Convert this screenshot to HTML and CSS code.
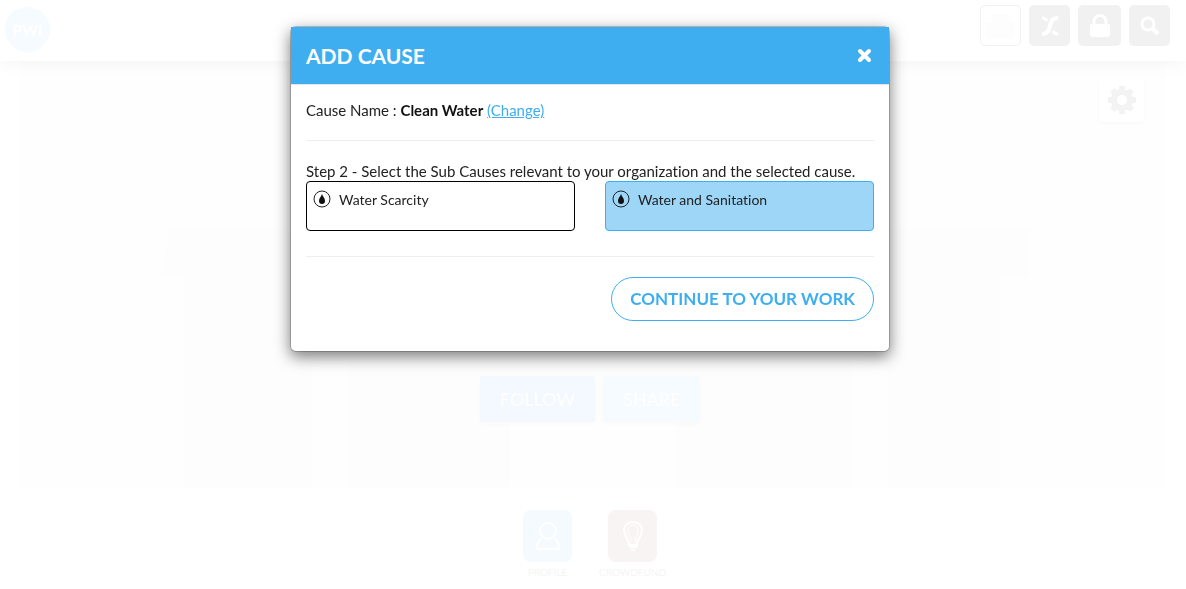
FILE: index.html
```html
<!DOCTYPE html>
<html lang="en">
<head>
    <meta charset="UTF-8">
    <meta name="viewport" content="width=device-width, initial-scale=1.0">
    <title>Add Cause</title>
    <link rel="stylesheet" href="styles.css">
</head>
<body>
    <header class="site-header">
        <a class="logo" href="#">PWI</a>
        <nav class="header-icons">
            <button class="icon-button icon-outline" aria-label="Organization">
                <svg width="29" height="26" viewBox="0 0 29 26" fill="#fdfdfd"><path d="M6 0h17v9h6v17H0V9h6z"/></svg>
            </button>
            <button class="icon-button" aria-label="Connections">
                <svg width="18" height="20" viewBox="0 0 18 20" fill="none" stroke="#fff" stroke-width="4"><path d="M17 2C11 2 10 5 9 10S6 18 1 18"/><path d="M1 2c2 0 4 1 5 3M17 18c-2 0-4-1-5-3" stroke-width="3"/></svg>
            </button>
            <button class="icon-button icon-lock" aria-label="Log in">
                <svg width="20" height="24" viewBox="0 0 20 24"><path d="M4 12V7a6 5.500 0 0 1 12 0v5" fill="none" stroke="#fff" stroke-width="3"/><rect y="10" width="20" height="13" rx="2" fill="#fff"/></svg>
            </button>
            <button class="icon-button" aria-label="Search">
                <svg width="20" height="20" viewBox="0 0 20 20" fill="none" stroke="#fff"><circle cx="8" cy="8" r="6" stroke-width="3"/><path d="M12 12l6 6" stroke-width="4"/></svg>
            </button>
        </nav>
    </header>

    <main>
        <section class="cover">
            <svg class="cover-art" viewBox="0 0 1146 428" preserveAspectRatio="none" fill="#fdfdfd" aria-hidden="true">
                <path d="M150 168H1009V216H980V426H867V300H833V426H655V360H490V426H327V300H293V426H165V216H142z"/>
            </svg>
            <button class="settings-button" aria-label="Settings">
                <svg width="28" height="28" viewBox="0 0 28 28">
                    <g fill="#f3f3f3">
                        <rect x="11" width="6" height="28" rx="1"/>
                        <rect x="11" width="6" height="28" rx="1" transform="rotate(45 14 14)"/>
                        <rect x="11" width="6" height="28" rx="1" transform="rotate(90 14 14)"/>
                        <rect x="11" width="6" height="28" rx="1" transform="rotate(135 14 14)"/>
                        <circle cx="14" cy="14" r="11"/>
                    </g>
                    <circle cx="14" cy="14" r="5" fill="#fff"/>
                </svg>
            </button>
            <div class="cover-actions">
                <button class="follow-button">FOLLOW</button>
                <button class="share-button">SHARE</button>
            </div>
        </section>

        <nav class="tabs">
            <a class="tab" href="#">
                <span class="tab-icon profile">
                    <svg width="24" height="28" viewBox="0 0 24 28" fill="none" stroke="#fff" stroke-width="2"><circle cx="12" cy="9" r="8"/><path d="M6 17c-3 1-5 4-5 10h22c0-6-2-9-5-10"/></svg>
                </span>
                PROFILE
            </a>
            <a class="tab" href="#">
                <span class="tab-icon crowdfund">
                    <svg width="20" height="30" viewBox="0 0 20 30" fill="none" stroke="#fff"><path d="M6 24c0-6-5-9-5-15a9 8 0 0 1 18 0c0 6-5 9-5 15z" stroke-width="2"/><path d="M8 22c0-6-3-8-3-13a5 5 0 0 1 10 0c0 5-3 7-3 13"/><path d="M6 26h8M8 29h4" stroke-width="2"/></svg>
                </span>
                CROWDFUND
            </a>
        </nav>
    </main>

    <div class="modal">
        <div class="modal-dialog" role="dialog" aria-labelledby="modalTitle">
            <div class="modal-header">
                <h1 class="modal-title" id="modalTitle">ADD CAUSE</h1>
                <button class="close-button" aria-label="Close">
                    <svg width="15" height="15" viewBox="0 0 15 15" stroke="#fff" stroke-width="4" stroke-linecap="round"><path d="M3 3l9 9M12 3l-9 9"/></svg>
                </button>
            </div>
            <div class="modal-body">
                <p>Cause Name : <strong>Clean Water</strong> <a class="change-link" href="#">(Change)</a></p>
                <hr>
                <p class="step">Step 2 - Select the Sub Causes relevant to your organization and the selected cause.</p>
                <div class="sub-causes">
                    <button class="sub-cause" aria-pressed="false">
                        <svg width="18" height="18" viewBox="0 0 18 18"><circle cx="9" cy="9" r="8" fill="none" stroke="#222"/><path d="M9 4c1 3 3 4 3 7a3 3 0 0 1-6 0c0-3 2-4 3-7z" fill="#111"/></svg>
                        Water Scarcity
                    </button>
                    <button class="sub-cause selected" aria-pressed="true">
                        <svg width="18" height="18" viewBox="0 0 18 18"><circle cx="9" cy="9" r="8" fill="none" stroke="#222"/><path d="M9 4c1 3 3 4 3 7a3 3 0 0 1-6 0c0-3 2-4 3-7z" fill="#111"/></svg>
                        Water and Sanitation
                    </button>
                </div>
                <hr>
                <div class="modal-actions">
                    <button class="continue-button">CONTINUE TO YOUR WORK</button>
                </div>
            </div>
        </div>
    </div>
</body>
</html>
```
FILE: styles.css
```css
* {
    box-sizing: border-box;
}

body {
    margin: 0;
    background: #fff;
    color: #222;
    font-family: Lato, "Liberation Sans", sans-serif;
    font-size: 15px;
    font-variant-ligatures: none;
    line-height: 20px;
    overflow: hidden;
}

button {
    padding: 0;
    border: none;
    background: none;
    color: inherit;
    font: inherit;
    cursor: pointer;
}

svg {
    display: block;
}

p {
    margin: 0;
}

/* Page header */
.site-header {
    display: flex;
    justify-content: space-between;
    align-items: flex-start;
    height: 61px;
    padding: 5px 16px 0 5px;
    background: #fff;
    box-shadow: 0 5px 15px rgba(0, 0, 0, 0.03);
    position: relative; /* Keep the shadow above the cover */
    z-index: 1;
}

.logo {
    display: flex;
    align-items: center;
    justify-content: center;
    width: 45px;
    height: 45px;
    margin-top: 2px;
    border-radius: 50%;
    background: #f5fbff;
    color: #fff;
    font-size: 15px;
    font-weight: 900;
    text-decoration: none;
}

.header-icons {
    display: flex;
    gap: 8px;
}

.icon-button {
    display: flex;
    align-items: center;
    justify-content: center;
    width: 41px;
    height: 41px;
    border-radius: 5px;
    background: #f1f1f1;
}

.icon-outline {
    border: 1px solid #f1f1f1;
    background: #fff;
}

.icon-lock {
    width: 43px;
}

/* Cover */
.cover {
    display: flex;
    flex-direction: column;
    justify-content: space-between;
    min-height: 428px;
    margin: 0 20px;
    padding: 17px 22px 67px;
    background: #fefefe;
    position: relative;
}

.cover-art {
    position: absolute; /* Table drawing behind the buttons */
    inset: 0;
    width: 100%;
    height: 100%;
}

.settings-button {
    display: flex;
    align-items: center;
    justify-content: center;
    align-self: flex-end;
    width: 45px;
    height: 44px;
    border-radius: 3px;
    background: #fff;
    box-shadow: 0 1px 3px rgba(0, 0, 0, 0.03);
    position: relative;
}

.cover-actions {
    display: flex;
    justify-content: center;
    gap: 8px;
    padding-right: 6px;
    position: relative;
}

.follow-button,
.share-button {
    height: 46px;
    padding: 0 20px;
    border-radius: 3px;
    background: #f3f9fe;
    box-shadow: 0 2px 4px rgba(0, 0, 0, 0.02);
    color: #fff;
    font-size: 18px;
}

.share-button {
    background: #f5fbff;
}

/* Tabs */
.tabs {
    display: flex;
    justify-content: center;
    padding: 21px 6px 0 0;
}

.tab {
    display: flex;
    flex-direction: column;
    align-items: center;
    width: 85px;
    color: #f5f5f5;
    font-size: 10px;
    text-decoration: none;
}

.tab-icon {
    display: flex;
    align-items: center;
    justify-content: center;
    width: 49px;
    height: 52px;
    border-radius: 8px;
}

.profile {
    background: #f4fafe;
}

.crowdfund {
    background: #f9f4f4;
}

/* Modal */
.modal {
    position: fixed;
    inset: 0;
    z-index: 2;
    padding: 26px 6px 0 0;
}

.modal-dialog {
    max-width: 600px;
    margin: 0 auto;
    border: 1px solid rgba(0, 0, 0, 0.2);
    border-radius: 6px;
    background: #fff;
    background-clip: padding-box;
    box-shadow: 0 5px 15px rgba(0, 0, 0, 0.5);
}

.modal-header {
    display: flex;
    align-items: center;
    justify-content: space-between;
    height: 58px;
    padding: 0 17px 0 15px;
    border-bottom: 1px solid #e5e5e5;
    background: #3eaef0;
    background-clip: padding-box;
    color: #fff;
}

.modal-title {
    margin: 0;
    font-size: 21px;
    font-weight: 700;
}

.modal-body {
    padding: 15px 15px 30px;
}

hr {
    margin: 20px 0;
    border: none;
    border-top: 1px solid #eee;
}

strong {
    color: #111;
}

.change-link {
    color: #3eaef0;
}

.step {
    white-space: nowrap;
}

.sub-causes {
    display: grid;
    grid-template-columns: 1fr 1fr;
    gap: 30px;
    margin-bottom: 25px;
}

.sub-cause {
    display: flex;
    align-items: flex-start;
    gap: 8px;
    height: 50px;
    padding: 8px 6px;
    border: 1px solid #000;
    border-radius: 4px;
    font-size: 14px;
}

.selected {
    border-color: #3eaef0;
    background: #9dd6f7;
}

.modal-actions {
    display: flex;
    justify-content: flex-end;
}

.continue-button {
    height: 44px;
    padding: 0 18px;
    border: 1px solid #3eaef0;
    border-radius: 22px;
    color: #3eaef0;
    font-size: 17px;
    font-weight: 700;
}
```
